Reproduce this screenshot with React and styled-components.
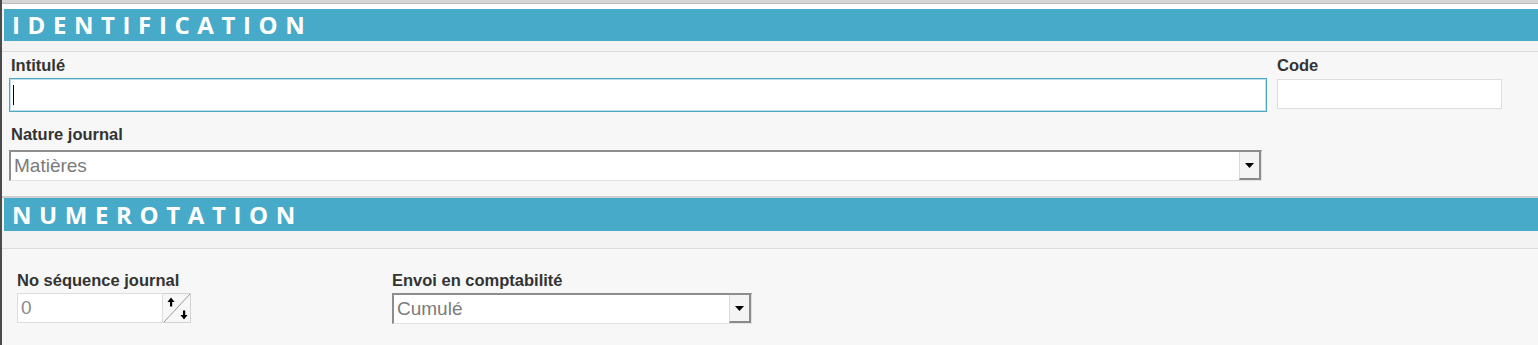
import styled, { createGlobalStyle } from "styled-components";

const GlobalStyle = createGlobalStyle`
  html, body {
    margin: 0;
    padding: 0;
    background-color: #f7f7f7;
  }
  * {
    box-sizing: border-box;
  }
`;

const Frame = styled.div`
  min-height: 345px;
  border-left: 2px solid #4b4b4b;
  background-color: #f7f7f7;
  font-family: "Liberation Sans", Arial, sans-serif;
  overflow: hidden;
`;

const TopEdge = styled.div`
  height: 9px;
  background-color: #ffffff;
  border-top: 3px solid #d6d6d6;
  box-shadow: inset 0 1px 0 #bcbcbc;
`;

const BandWrap = styled.div`
  padding-bottom: ${(p) => p.$after}px;
  background-color: #f3f3f3;
  border-top: ${(p) => (p.$topLine ? "2px solid #cfcfcf" : "none")};
  border-bottom: 1px solid #dcdcdc;
  margin-top: ${(p) => p.$gapTop || 0}px;
`;

const Band = styled.div`
  margin-left: 2px;
  height: ${(p) => p.$height}px;
  background-color: #48aac9;
  display: flex;
  align-items: center;
  padding-left: 8px;
`;

const BandTitle = styled.h2`
  margin: 0;
  font-family: "Open Sans", "Liberation Sans", sans-serif;
  font-weight: 700;
  font-size: 24px;
  letter-spacing: 7.6px;
  color: #ffffff;
  line-height: 1;
`;

const SectionBody = styled.div`
  display: grid;
  grid-template-columns: ${(p) => p.$cols};
  column-gap: ${(p) => p.$gap}px;
  row-gap: 13px;
  align-items: start;
  padding: ${(p) => p.$pad};
`;

const Field = styled.div`
  display: flex;
  flex-direction: column;
  gap: ${(p) => p.$gap || 4}px;
`;

const Label = styled.label`
  font-size: 16.5px;
  line-height: 18px;
  font-weight: 700;
  color: #333333;
  padding-left: ${(p) => p.$indent || 0}px;
`;

const FocusedBox = styled.div`
  height: 34px;
  background-color: #ffffff;
  border: 1px solid #4ea8c4;
  box-shadow: inset 0 0 0 1px #bfe0ea;
  display: flex;
  align-items: center;
  padding-left: 3px;
`;

const Caret = styled.span`
  width: 1px;
  height: 20px;
  background-color: #000000;
`;

const TextInput = styled.input`
  height: ${(p) => p.$height || 30}px;
  width: ${(p) => p.$width || "100%"};
  margin-top: ${(p) => p.$offset || 0}px;
  border: 1px solid #dddddd;
  background-color: #ffffff;
  padding: 0 3px;
  font-family: "Liberation Sans", Arial, sans-serif;
  font-size: 19px;
  color: #8a8a8a;
  outline: none;
`;

const SelectBox = styled.div`
  height: 31px;
  width: ${(p) => p.$width};
  display: flex;
  background-color: #ffffff;
  border-top: 2px solid #8d8d8d;
  border-left: 2px solid #8d8d8d;
  border-right: 1px solid #e2e2e2;
  border-bottom: 1px solid #e2e2e2;
`;

const SelectValue = styled.span`
  flex: 1;
  font-size: 19px;
  line-height: 28px;
  color: #7b7b7b;
  padding-left: 3px;
`;

const ArrowButton = styled.span`
  width: 22px;
  display: flex;
  align-items: center;
  justify-content: center;
  background-color: #f4f4f4;
  border-left: 1px solid #dadada;
  border-right: 2px solid #8a8a8a;
  border-bottom: 2px solid #8a8a8a;
`;

const NumberRow = styled.div`
  display: flex;
`;

const Spinner = styled.span`
  width: 28px;
  height: 30px;
  display: block;
  background-color: #f7f7f7;
  border: 1px solid #d2d2d2;
  border-left: none;
`;

const DropArrow = () => (
  <svg width="9" height="5" viewBox="0 0 9 5">
    <polygon points="0,0 9,0 4.5,5" fill="#000" />
  </svg>
);

const Select = ({ value, width }) => (
  <SelectBox $width={width} role="combobox">
    <SelectValue>{value}</SelectValue>
    <ArrowButton>
      <DropArrow />
    </ArrowButton>
  </SelectBox>
);

const SpinIcon = () => (
  <Spinner>
    <svg width="27" height="28" viewBox="0 0 27 28">
      <line x1="1" y1="28" x2="27" y2="0" stroke="#9a9a9a" strokeWidth="1" />
      <polygon points="4.5,8 8,3.5 11.5,8" fill="#000" />
      <rect x="7" y="7.5" width="2.2" height="5" fill="#000" />
      <rect x="20" y="16.5" width="2.2" height="5" fill="#000" />
      <polygon points="17.5,21 24.5,21 21,25.5" fill="#000" />
    </svg>
  </Spinner>
);

const Section = ({ title, height, after, topLine, gapTop }) => (
  <BandWrap $after={after} $topLine={topLine} $gapTop={gapTop}>
    <Band $height={height}>
      <BandTitle>{title}</BandTitle>
    </Band>
  </BandWrap>
);

const App = () => {
  return (
    <>
      <GlobalStyle />
      <Frame>
        <TopEdge />
        <Section title="IDENTIFICATION" height={32} after={10} />
        <SectionBody $cols="1258px 225px" $gap={10} $pad="4px 0 0 7px">
          <Field>
            <Label $indent={2}>Intitulé</Label>
            <FocusedBox>
              <Caret />
            </FocusedBox>
          </Field>
          <Field>
            <Label>Code</Label>
            <TextInput $height={30} $offset={1} />
          </Field>
          <Field $gap={7}>
            <Label $indent={2}>Nature journal</Label>
            <Select value="Matières" width="1253px" />
          </Field>
        </SectionBody>
        <Section title="NUMEROTATION" height={33} after={17} topLine gapTop={15} />
        <SectionBody $cols="374px 360px" $gap={1} $pad="22px 0 0 15px">
          <Field>
            <Label>No séquence journal</Label>
            <NumberRow>
              <TextInput $height={30} $width="146px" value="0" readOnly />
              <SpinIcon />
            </NumberRow>
          </Field>
          <Field>
            <Label>Envoi en comptabilité</Label>
            <Select value="Cumulé" width="360px" />
          </Field>
        </SectionBody>
      </Frame>
    </>
  );
};

export default App;
